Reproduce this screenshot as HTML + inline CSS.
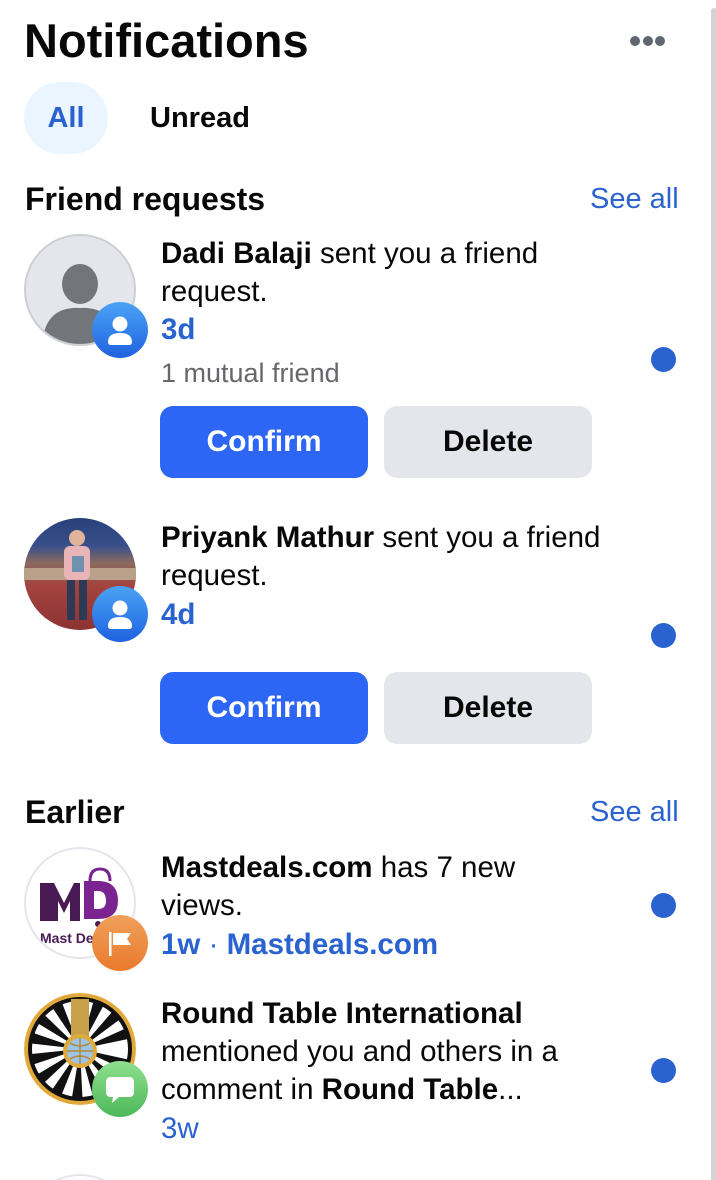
<!DOCTYPE html>
<html style="width:716px;height:1180px;overflow:hidden"><head><meta charset="utf-8"><style>
*{margin:0;padding:0;box-sizing:border-box}
body{width:716px;height:1180px;overflow:hidden;background:#fff;font-family:"Liberation Sans",sans-serif;color:#080809;position:relative}
.a{position:absolute;white-space:nowrap}
.t{font-size:29.5px;line-height:38px}
.b{font-weight:bold}
.blue{color:#2a63cf}
.dot{position:absolute;left:651px;width:25px;height:25px;border-radius:50%;background:#2a63cf}
.btn{position:absolute;width:208px;height:72px;border-radius:13px;font-size:30px;font-weight:bold;text-align:center;line-height:72px}
.cf{background:#2d66f4;color:#fff}
.dl{background:#e4e6eb;color:#080809}
.av{position:absolute;left:24px;width:112px;height:112px;border-radius:50%;overflow:hidden}
.bd{position:absolute;left:92px;width:56px;height:56px;border-radius:50%}
</style></head><body>
<div style="position:absolute;left:711px;top:8px;width:5px;height:1172px;background:#d4d4d6;border-radius:3px 0 0 0"></div>

<div class="a b" style="left:24px;top:13px;font-size:47px;line-height:56px">Notifications</div>
<div class="a" style="left:630px;top:36px;width:10px;height:10px;border-radius:50%;background:#606770"></div>
<div class="a" style="left:643px;top:36px;width:10px;height:10px;border-radius:50%;background:#606770"></div>
<div class="a" style="left:655px;top:36px;width:10px;height:10px;border-radius:50%;background:#606770"></div>

<div class="a b blue" style="left:24px;top:82px;width:84px;height:72px;border-radius:36px;background:#ebf5ff;text-align:center;line-height:72px;font-size:29px">All</div>
<div class="a b" style="left:150px;top:82px;line-height:72px;font-size:29px">Unread</div>

<div class="a b" style="left:25px;top:180px;font-size:32px;line-height:38px">Friend requests</div>
<div class="a blue" style="left:590px;top:180px;font-size:29px;line-height:38px">See all</div>

<!-- Dadi -->
<div class="av" style="top:234px;background:#e4e6eb;border:2px solid #ccd0d5">
<svg width="112" height="112" viewBox="0 0 112 112" style="position:absolute;left:-2px;top:-2px"><ellipse cx="56" cy="50" rx="18" ry="20" fill="#72767a"/><path d="M18 112 Q20 72 56 74 Q92 72 94 112Z" fill="#72767a"/></svg></div>
<div class="bd" style="top:302px;background:linear-gradient(#4aa3f5,#1f62e0)"><svg width="56" height="56" viewBox="0 0 56 56"><circle cx="28" cy="22" r="7.5" fill="#fff"/><path d="M16 40 Q16 31 28 31 Q40 31 40 40 Q40 43 37 43 H19 Q16 43 16 40Z" fill="#fff"/></svg></div>
<div class="a t" style="left:161px;top:235px"><span class="b">Dadi Balaji</span> sent you a friend<br>request.</div>
<div class="a t blue b" style="left:161px;top:311px">3d</div>
<div class="a" style="left:161px;top:355px;font-size:27px;line-height:36px;color:#65676b">1 mutual friend</div>
<div class="dot" style="top:347px"></div>
<div class="btn cf" style="left:160px;top:406px">Confirm</div>
<div class="btn dl" style="left:384px;top:406px">Delete</div>

<!-- Priyank -->
<div class="av" style="top:518px;background:linear-gradient(#28407a 0%,#3a4f8a 25%,#8a6a60 40%,#a3443f 60%,#8d3234 100%)">
<svg width="112" height="112" viewBox="0 0 112 112"><rect x="0" y="50" width="112" height="12" fill="#b9a18a"/><rect x="40" y="28" width="26" height="34" rx="6" fill="#e8b4b8"/><circle cx="53" cy="20" r="8" fill="#e0b49a"/><rect x="43" y="62" width="8" height="40" fill="#2d3a55"/><rect x="55" y="62" width="8" height="40" fill="#2d3a55"/><rect x="48" y="38" width="12" height="16" fill="#7090b0"/></svg></div>
<div class="bd" style="top:586px;background:linear-gradient(#4aa3f5,#1f62e0)"><svg width="56" height="56" viewBox="0 0 56 56"><circle cx="28" cy="22" r="7.5" fill="#fff"/><path d="M16 40 Q16 31 28 31 Q40 31 40 40 Q40 43 37 43 H19 Q16 43 16 40Z" fill="#fff"/></svg></div>
<div class="a t" style="left:161px;top:519px"><span class="b">Priyank Mathur</span> sent you a friend<br>request.</div>
<div class="a t blue b" style="left:161px;top:596px">4d</div>
<div class="dot" style="top:623px"></div>
<div class="btn cf" style="left:160px;top:672px">Confirm</div>
<div class="btn dl" style="left:384px;top:672px">Delete</div>

<div class="a b" style="left:25px;top:793px;font-size:32px;line-height:38px">Earlier</div>
<div class="a blue" style="left:590px;top:793px;font-size:29px;line-height:38px">See all</div>

<!-- Mastdeals -->
<div class="av" style="top:847px;background:#fff;border:2px solid #e4e6eb">
<svg width="112" height="112" viewBox="0 0 112 112" style="position:absolute;left:-2px;top:-2px"><path d="M16 74 V36 L30 36 L40 56 L50 36 H56 V74 H46 V54 L40 66 L34 54 V74Z" fill="#4a1a55"/><path d="M60 34 H74 Q94 34 94 54 Q94 72 74 72 H60Z M70 44 V62 H74 Q82 62 82 54 Q82 44 74 44Z" fill="#7b2390" fill-rule="evenodd"/><path d="M66 34 Q66 22 76 22 Q86 22 86 34" stroke="#7b2390" stroke-width="3" fill="none"/><circle cx="74" cy="77" r="3" fill="#4a1a55"/><circle cx="84" cy="77" r="3" fill="#4a1a55"/><text x="16" y="96" font-family="Liberation Sans" font-weight="bold" font-size="14" fill="#4a1a55">Mast Deals</text></svg></div>
<div class="bd" style="top:915px;background:linear-gradient(#f0a05c,#ea7a2c)"><svg width="56" height="56" viewBox="0 0 56 56"><rect x="17" y="17" width="2.5" height="24" fill="#fff"/><path d="M21 18 H39 L35 24 L39 30 H21Z" fill="#fff"/></svg></div>
<div class="a t" style="left:161px;top:849px"><span class="b">Mastdeals.com</span> has 7 new<br>views.</div>
<div class="a t blue b" style="left:161px;top:926px">1w <span style="font-weight:normal">·</span> Mastdeals.com</div>
<div class="dot" style="top:893px"></div>

<!-- Round Table -->
<div class="av" style="top:993px">
<svg width="112" height="112" viewBox="0 0 112 112"><circle cx="56" cy="56" r="56" fill="#e0a93a"/><circle cx="56" cy="56" r="51" fill="#111"/><circle cx="56" cy="56" r="30" fill="none" stroke="#fff" stroke-width="40" stroke-dasharray="6.5 6.5"/><circle cx="56" cy="56" r="50" fill="none" stroke="#111" stroke-width="4"/><rect x="47" y="6" width="18" height="46" fill="#c9a04a"/><circle cx="56" cy="58" r="17" fill="#e0a93a"/><circle cx="56" cy="58" r="13" fill="#9fc3e2"/><path d="M43 58H69M56 45V71M46 50Q56 56 66 50M46 66Q56 60 66 66" stroke="#b08a3a" stroke-width="1.5" fill="none"/></svg></div>
<div class="bd" style="top:1061px;background:linear-gradient(#8fe08f,#4db85a)"><svg width="56" height="56" viewBox="0 0 56 56"><path d="M19 16 H37 Q42 16 42 21 V31 Q42 36 37 36 H27 L20 42 L21 36 H19 Q14 36 14 31 V21 Q14 16 19 16Z" fill="#fff"/></svg></div>
<div class="a t" style="left:161px;top:995px"><span class="b">Round Table International</span><br>mentioned you and others in a<br>comment in <span class="b">Round Table</span>...</div>
<div class="a t blue" style="left:161px;top:1110px">3w</div>
<div class="dot" style="top:1058px"></div>

<div style="position:absolute;left:0;top:1170px;width:716px;height:10px;overflow:hidden"><div style="position:absolute;left:24px;top:4px;width:112px;height:112px;border-radius:50%;border:2px solid #e4e6eb"></div></div>
</body></html>
